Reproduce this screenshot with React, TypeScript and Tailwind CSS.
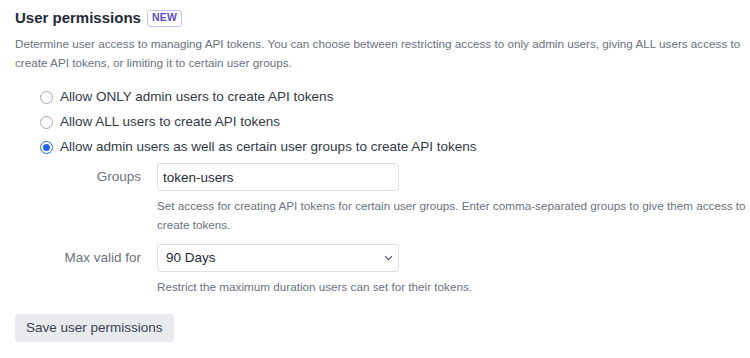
import { useState } from 'react';

const options = [
  { id: 'admin', label: 'Allow ONLY admin users to create API tokens' },
  { id: 'all', label: 'Allow ALL users to create API tokens' },
  { id: 'groups', label: 'Allow admin users as well as certain user groups to create API tokens' },
];

const Radio = ({ checked }: { checked: boolean }) => (
  <span
    className={`w-[13px] h-[13px] rounded-full border flex items-center justify-center shrink-0 ${
      checked ? 'border-[#2563eb] bg-white' : 'border-[#a3a8b0] bg-white'
    }`}
  >
    {checked && <span className="w-[7px] h-[7px] rounded-full bg-[#2563eb]" />}
  </span>
);

const App = () => {
  const [mode, setMode] = useState('groups');
  const [groups, setGroups] = useState('token-users');

  return (
    <div
      className="w-[750px] h-[358px] bg-white pl-[15px] pr-0 pt-[7px] text-[#374151]"
      style={{ fontFamily: '"Liberation Sans", Arial, sans-serif' }}
    >
      {/* Header */}
      <div className="flex items-center gap-[6px] h-[22px]">
        <h2 className="text-[15px] font-bold text-[#1f2937]">User permissions</h2>
        <span className="border border-[#c7bff5] rounded-[3px] px-[4px] h-[17px] flex items-center text-[10.5px] font-bold text-[#5b4ec2] tracking-wide">
          NEW
        </span>
      </div>
      <p className="mt-[5px] text-[11.7px] leading-[19px] text-[#6b7280]">
        Determine user access to managing API tokens. You can choose between restricting access to only
        admin users, giving ALL users access to create API tokens, or limiting it to certain user groups.
      </p>

      {/* Options */}
      <div className="mt-[13px] pl-[25px] flex flex-col">
        {options.map((o) => (
          <label
            key={o.id}
            onClick={() => setMode(o.id)}
            className="flex items-center gap-[7px] h-[25px] text-[13.5px] text-[#333a45] cursor-pointer"
          >
            <Radio checked={mode === o.id} />
            {o.label}
          </label>
        ))}
      </div>

      {/* Fields */}
      <div className="mt-[3px] grid grid-cols-[126px_1fr] gap-x-[16px] items-start">
        <div className="h-[28px] flex items-center justify-end text-[13.5px] text-[#6b7280]">Groups</div>
        <div>
          <input
            value={groups}
            onChange={(e) => setGroups(e.target.value)}
            className="w-[242px] h-[28px] border border-[#dcdfe4] rounded-[3px] px-[5px] text-[13.5px] text-[#1f2937] outline-none"
          />
          <p className="mt-[5px] text-[11.7px] leading-[19px] text-[#6b7280]">
            Set access for creating API tokens for certain user groups. Enter comma-separated groups to give them
            access to create tokens.
          </p>
        </div>

        <div className="mt-[10px] h-[28px] flex items-center justify-end text-[13.5px] text-[#6b7280]">
          Max valid for
        </div>
        <div className="mt-[10px]">
          <div className="w-[242px] h-[28px] border border-[#dcdfe4] rounded-[3px] pl-[8px] pr-[5px] flex items-center justify-between text-[13.5px] text-[#1f2937]">
            <span>90 Days</span>
            <svg width="9" height="6" viewBox="0 0 9 6" fill="none" stroke="#4b5563" strokeWidth="1.2">
              <path d="M1 1.2l3.5 3.5 3.5-3.5" />
            </svg>
          </div>
          <p className="mt-[5px] text-[11.7px] leading-[19px] text-[#6b7280]">
            Restrict the maximum duration users can set for their tokens.
          </p>
        </div>
      </div>

      <button className="mt-[18px] h-[28px] px-[11px] rounded-[3px] bg-[#e8eaed] text-[13.5px] text-[#3b4252]">
        Save user permissions
      </button>
    </div>
  );
};

export default App;
